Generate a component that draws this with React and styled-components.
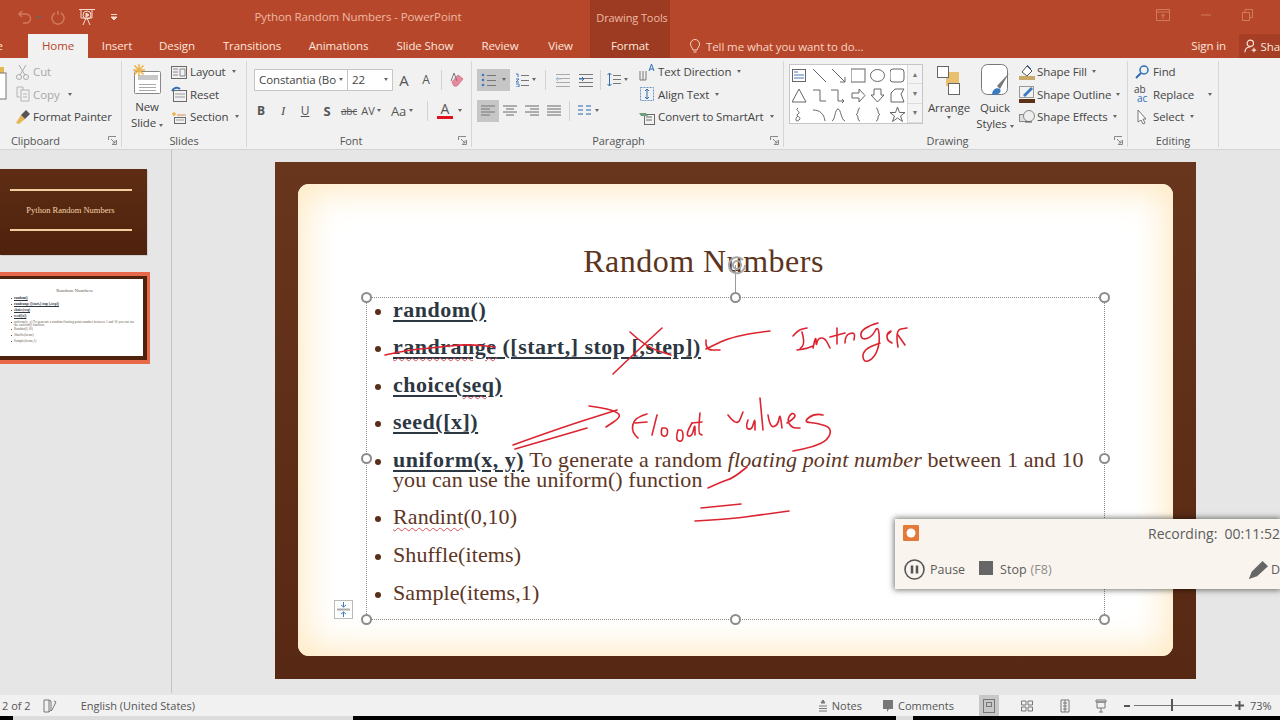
import React from 'react';
import styled, { createGlobalStyle } from 'styled-components';

const Global = createGlobalStyle`
  html, body { margin: 0; padding: 0; background: #e6e6e6; overflow: hidden; }
  * { box-sizing: border-box; }
`;

const Page = styled.div`
  position: relative;
  width: 1280px;
  height: 720px;
  overflow: hidden;
  display: flex;
  flex-direction: column;
  background: #e6e6e6;
  font-family: "Open Sans", "Noto Sans", sans-serif;
  font-size: 11.5px;
  letter-spacing: -0.1px;
  color: #444;
`;

/* title bar + tabs */
const TitleBar = styled.div`
  height: 34px;
  flex: none;
  display: flex;
  align-items: stretch;
  background: #b7472a;
  color: #f1bda9;
`;
const Quick = styled.div`
  width: 190px;
  flex: none;
  display: flex;
  align-items: center;
  padding-left: 17px;
`;
const QuickSlot = styled.span`
  display: flex;
  margin-left: ${p => p.$left || 0}px;
`;
const DocTitle = styled.div`
  width: 400px;
  flex: none;
  padding-right: 64px;
  text-align: center;
  line-height: 34px;
  color: #eeb9a4;
`;
const ContextHead = styled.div`
  width: 80px;
  flex: none;
  padding-left: 4px;
  background: #9c3b21;
  text-align: center;
  line-height: 36px;
  font-size: 11px;
  color: #eeb9a4;
`;
const WinButtons = styled.div`
  margin-left: auto;
  display: flex;
  gap: 30px;
  align-items: center;
  padding: 0 27px 4px 0;
`;
const TabBar = styled.div`
  height: 24px;
  flex: none;
  display: flex;
  background: #b7472a;
  color: #fbe6dd;
`;
const Tab = styled.div`
  width: ${p => p.$w}px;
  flex: none;
  text-align: center;
  line-height: 24px;
  overflow: hidden;
  white-space: nowrap;
  background: ${p => (p.$active ? '#f1f1f1' : p.$context ? '#9c3b21' : 'transparent')};
  color: ${p => (p.$active ? '#b7472a' : '#fbe6dd')};
`;
const FileTab = styled.div`
  width: 28px;
  flex: none;
  line-height: 24px;
  white-space: nowrap;
  overflow: hidden;
  text-indent: -15px;
`;
const TellMe = styled.div`
  margin-left: 19px;
  display: flex;
  align-items: center;
  gap: 5px;
  color: #f7d4c6;
  width: 500px;
`;
const SignIn = styled.div`
  margin-left: auto;
  line-height: 24px;
  color: #fbe6dd;
  padding-right: 13px;
`;
const Share = styled.div`
  width: 41px;
  flex: none;
  display: flex;
  align-items: center;
  gap: 3px;
  padding-left: 5px;
  background: #a53e24;
  color: #fbe6dd;
  white-space: nowrap;
  overflow: hidden;
`;

/* ribbon */
const Ribbon = styled.div`
  height: 92px;
  flex: none;
  display: flex;
  padding-top: 3px;
  background: #f1f1f1;
  border-bottom: 1px solid #d4d4d4;
  white-space: nowrap;
`;
const Group = styled.div`
  position: relative;
  width: ${p => p.$w}px;
  flex: none;
  height: 86px;
  display: flex;
  flex-direction: column;
  border-right: 1px solid #d6d6d6;
`;
const GroupBody = styled.div`
  height: 71px;
  flex: none;
  display: flex;
  padding-left: ${p => p.$left || 0}px;
  gap: ${p => p.$gap || 0}px;
`;
const GroupLabel = styled.div`
  text-align: ${p => (p.$left ? 'left' : 'center')};
  padding-left: ${p => p.$left || 0}px;
  padding-right: ${p => p.$right || 0}px;
  font-size: 11px;
  line-height: 15px;
  margin-top: 1px;
  color: #555;
`;
const Launcher = styled.svg`
  position: absolute;
  right: 4px;
  bottom: 2px;
`;
const Stack = styled.div`
  display: flex;
  flex-direction: column;
  width: ${p => (p.$w ? `${p.$w}px` : 'auto')};
  flex: none;
  padding-top: ${p => p.$top || 0}px;
`;
const Item = styled.div`
  height: 22.5px;
  display: flex;
  align-items: center;
  margin-top: -0.5px;
  margin-bottom: 0.5px;
  gap: ${p => p.$gap ?? 4}px;
  color: ${p => (p.$dim ? '#a8a8a8' : '#444')};
`;
const Caret = styled.span`
  display: inline-block;
  width: 0;
  height: 0;
  margin-left: ${p => p.$left ?? 3}px;
  border-left: 2.5px solid transparent;
  border-right: 2.5px solid transparent;
  border-top: 3px solid #666;
`;
const BigButton = styled.div`
  width: ${p => p.$w}px;
  flex: none;
  display: flex;
  flex-direction: column;
  align-items: center;
  line-height: 16px;
  padding-top: ${p => p.$top || 0}px;
`;
const IconSlot = styled.div`
  height: ${p => p.$h}px;
  flex: none;
`;
const ToolRow = styled.div`
  height: 31px;
  display: flex;
  align-items: center;
  margin-left: ${p => p.$left || 0}px;
`;
const Combo = styled.div`
  width: ${p => p.$w}px;
  height: 22px;
  flex: none;
  display: flex;
  align-items: center;
  justify-content: space-between;
  padding: 0 4px;
  margin-right: -1px;
  background: #fff;
  border: 1px solid #c6c6c6;
`;
const Tool = styled.div`
  width: ${p => p.$w || 22}px;
  height: 22px;
  flex: none;
  display: flex;
  align-items: center;
  justify-content: center;
  background: ${p => (p.$on ? '#c6c6c6' : 'transparent')};
  font-family: ${p => (p.$serif ? '"Liberation Serif", serif' : 'inherit')};
  font-weight: ${p => (p.$bold ? 700 : 400)};
  font-style: ${p => (p.$italic ? 'italic' : 'normal')};
  text-decoration: ${p => (p.$under ? 'underline' : p.$strike ? 'line-through' : 'none')};
  font-size: ${p => p.$size || 12}px;
  color: #555;
`;
const ColorTool = styled(Tool)`
  flex-direction: column;
  line-height: 14px;
  font-size: 14px;
`;
const ToolSep = styled.div`
  width: 1px;
  height: 20px;
  flex: none;
  margin: 0 ${p => p.$m || 5}px;
  background: #d2d2d2;
`;
const Gallery = styled.div`
  width: 134px;
  height: 60px;
  flex: none;
  margin-top: 3px;
  display: flex;
  background: #fff;
  border: 1px solid #c6c6c6;
`;
const ShapeGrid = styled.div`
  flex: 1;
  padding-top: 1px;
  display: grid;
  grid-template-columns: repeat(6, 19.5px);
  grid-auto-rows: 19.6px;
  justify-items: center;
  align-items: center;
`;
const GalleryScroll = styled.div`
  width: 15px;
  flex: none;
  display: flex;
  flex-direction: column;
  border-left: 1px solid #d8d8d8;
  background: #f4f4f4;
`;
const ScrollCell = styled.div`
  flex: 1;
  display: flex;
  align-items: center;
  justify-content: center;
  font-size: 7px;
  color: #777;
  border-bottom: 1px solid #dcdcdc;
`;
const ReplaceGlyph = styled.div`
  width: 16px;
  flex: none;
  display: flex;
  flex-direction: column;
  font-size: 10px;
  line-height: 9px;
  letter-spacing: 0;
  color: #444;
  span + span {
    color: #2f6eb5;
    padding-left: 3px;
  }
`;

/* workspace */
const Workspace = styled.div`
  flex: 1;
  min-height: 0;
  display: flex;
`;
const ThumbRail = styled.div`
  width: 172px;
  flex: none;
  margin-bottom: 2px;
  padding-top: 19px;
  display: flex;
  flex-direction: column;
  border-right: 1px solid #c4c4c4;
`;
const TitleThumb = styled.div`
  width: 147px;
  height: 86px;
  flex: none;
  display: flex;
  flex-direction: column;
  align-items: center;
  justify-content: center;
  padding-right: 6px;
  padding-bottom: 4px;
  gap: 14px;
  background: linear-gradient(180deg, #5e2d13, #4f220e);
  box-shadow: 1px 1px 0 #cfcfcf;
  color: #f3d6a8;
  font-family: "Liberation Serif", serif;
  font-size: 8.5px;
  letter-spacing: 0;
  white-space: nowrap;
`;
const ThumbRule = styled.div`
  width: 122px;
  height: 2px;
  background: #f0cf9f;
`;
const ActiveThumb = styled.div`
  width: 150px;
  height: 92px;
  flex: none;
  margin-top: 17px;
  padding: 4px 3px 4px 0;
  background: #e8694a;
`;
const ThumbWood = styled.div`
  height: 100%;
  padding: 3px 4px 4px 0;
  background: #4f220e;
`;
const ThumbPage = styled.div`
  height: 100%;
  background: #fff;
  padding: 8px 8px 0 14px;
  font-family: "Liberation Serif", serif;
  font-size: 3.4px;
  letter-spacing: 0;
  line-height: 3px;
  color: #6a5a50;
`;
const ThumbHead = styled.div`
  text-align: center;
  font-size: 5px;
  line-height: 8px;
  margin-bottom: 2px;
`;
const ThumbLine = styled.div`
  position: relative;
  margin-bottom: ${p => p.$tight ? 1 : 3}px;
  font-weight: ${p => (p.$bold ? 700 : 400)};
  text-decoration: ${p => (p.$bold ? 'underline' : 'none')};
  color: ${p => (p.$bold ? '#2c3440' : '#6a5a50')};
  &::before {
    content: "";
    position: absolute;
    left: -3px;
    top: 1px;
    width: 1px;
    height: 1px;
    background: #6a4a38;
  }
`;
const Stage = styled.div`
  flex: 1;
  padding: 12px 0 0 103px;
`;
const Slide = styled.div`
  width: 921px;
  height: 517px;
  padding: 22px 23px 23px;
  background: linear-gradient(180deg, #68361c, #5f2e17 55%, #572813);
`;
const Card = styled.div`
  height: 100%;
  padding-left: 68px;
  border-radius: 11px;
  background: #fff;
  box-shadow: inset 0 0 34px 8px #ffeac4;
`;
const SlideTitle = styled.div`
  height: 113px;
  padding: 58px 64px 0 0;
  margin-left: -68px;
  text-align: center;
  font-family: "Liberation Serif", serif;
  font-size: 32px;
  line-height: 38px;
  letter-spacing: 0.5px;
  color: #5c3420;
`;
const Frame = styled.div`
  position: relative;
  width: 739px;
  height: 323px;
  padding: 1.5px 8px 0 8px;
  display: flex;
  flex-direction: column;
  gap: 17.6px;
  border: 1px dotted #8a8a8a;
  font-family: "Liberation Serif", serif;
  font-size: 22px;
  letter-spacing: 0.1px;
  line-height: 20px;
  color: #5d3524;
`;
const Bullet = styled.li`
  display: flex;
  list-style: none;
  gap: 12px;
  &::before {
    content: "";
    flex: none;
    width: 6px;
    height: 6px;
    margin-top: 9px;
    border-radius: 50%;
    background: #5a2f1a;
  }
`;
const Fn = styled.span`
  font-weight: 700;
  letter-spacing: 0.5px;
  color: #2d3742;
  text-decoration: underline;
  text-decoration-thickness: 1.5px;
  text-underline-offset: 3px;
`;
const Sic = styled.span`
  text-decoration: underline wavy #d9505a 1px;
  text-underline-offset: 3px;
`;
const Handle = styled.span`
  position: absolute;
  left: ${p => p.$x}px;
  top: ${p => p.$y}px;
  width: 11px;
  height: 11px;
  margin: -6px 0 0 -6px;
  border: 2px solid #8c8c8c;
  border-radius: 50%;
  background: #fff;
`;
const RotateStem = styled.span`
  position: absolute;
  left: 368px;
  top: -33px;
  width: 1px;
  height: 33px;
  background: #9a9a9a;
`;
const RotateIcon = styled.svg`
  position: absolute;
  left: 359px;
  top: -44px;
`;
const AutoFit = styled.svg`
  position: absolute;
  left: -33px;
  top: 302px;
`;
const Ink = styled.svg`
  position: absolute;
  left: 0;
  top: 0;
  pointer-events: none;
`;

/* recorder */
const Recorder = styled.div`
  position: absolute;
  left: 895px;
  top: 519px;
  width: 385px;
  height: 70px;
  display: flex;
  flex-direction: column;
  background: #f9f4ee;
  box-shadow: 0 0 6px 1px rgba(0, 0, 0, 0.55);
  color: #5c5c5c;
  white-space: nowrap;
`;
const RecTop = styled.div`
  height: 28px;
  flex: none;
  display: flex;
  align-items: center;
  justify-content: space-between;
  padding: 0 0 0 8px;
  font-size: 14px;
  letter-spacing: 0;
  overflow: hidden;
`;
const RecBottom = styled.div`
  flex: 1;
  display: flex;
  align-items: center;
  padding: 3px 0 0 9px;
  overflow: hidden;
  font-size: 12.5px;
  letter-spacing: 0;
`;
const RecLabel = styled.span`
  margin-left: ${p => p.$left}px;
`;
const Hint = styled.span`
  color: #8c8c8c;
  margin-left: 4px;
`;
const Square = styled.span`
  width: 14px;
  height: 14px;
  margin: 0 0 3px 14px;
  background: #666;
`;
const PencilWrap = styled.div`
  margin-left: auto;
  display: flex;
  align-items: center;
  gap: 2px;
  width: 32px;
  flex: none;
`;

/* status */
const StatusBar = styled.div`
  height: 21px;
  flex: none;
  display: flex;
  align-items: center;
  background: #f1f1f1;
  font-size: 11px;
  letter-spacing: 0;
  color: #555;
  white-space: nowrap;
`;
const StatusText = styled.span`
  display: flex;
  margin-left: ${p => p.$left || 0}px;
`;
const StatusTools = styled.div`
  margin-left: auto;
  display: flex;
  align-items: center;
  height: 100%;
`;
const ViewBtn = styled.div`
  width: ${p => p.$w || 20}px;
  height: 100%;
  margin-left: ${p => p.$before || 0}px;
  margin-right: ${p => p.$gap || 0}px;
  display: flex;
  align-items: center;
  justify-content: center;
  background: ${p => (p.$on ? '#c8c8c8' : 'transparent')};
`;
const ZoomTrack = styled.div`
  position: relative;
  width: 98px;
  height: 1px;
  margin: 0 3px;
  background: #777;
`;
const ZoomThumb = styled.span`
  position: absolute;
  left: 37px;
  top: -6px;
  width: 2px;
  height: 12px;
  background: #555;
`;
const ZoomValue = styled.span`
  width: 30px;
  margin-left: 6px;
  overflow: hidden;
`;
const TaskStrip = styled.div`
  height: 4px;
  flex: none;
  display: grid;
  grid-template-columns: 13px 340px 543px 17px 1fr;
  background: #000;
`;
const StripLight = styled.div`
  background: #dcdcdc;
`;

const Icon = ({ w = 16, h = 16, children, stroke = '#6b6b6b', fill = 'none', sw = 1 }) => (
  <svg width={w} height={h} viewBox={`0 0 ${w} ${h}`} fill={fill} stroke={stroke} strokeWidth={sw}>{children}</svg>
);

const LauncherIcon = () => (
  <Launcher width="9" height="9" viewBox="0 0 9 9" fill="none" stroke="#888"><path d="M.5 4V.5H8M8.5 4v4.500H4M3 3l4 4M7 4.500V7H4.500" /></Launcher>
);

const Lines = ({ x = 0, y = 0, n = 3, len = 12, gap = 4, color = '#777' }) => (
  <g stroke={color}>{Array.from({ length: n }, (_, i) => <path key={i} d={`M${x} ${y + i * gap + .5}h${len}`} />)}</g>
);

const shapes = [
  <g key="a"><rect x=".5" y="1.500" width="13" height="12" /><path d="M2 4h4M2 7h10M2 10h10" stroke="#4a7ab5" /></g>,
  <path key="b" d="M1 1l13 13" />,
  <path key="c" d="M1 1l13 13M9 14h5V9" />,
  <rect key="d" x="0" y="1" width="14" height="13" />,
  <ellipse key="e" cx="7.500" cy="7.500" rx="7" ry="6" />,
  <rect key="f" x="0" y="1" width="14" height="13" rx="3" />,
  <path key="g" d="M7 1l7 13H0z" />,
  <path key="h" d="M1 2h7v11h6" />,
  <path key="i" d="M0 2h7v11h6M11 11l2 2-2 2" />,
  <path key="j" d="M1 5h7V1l6 6.500-6 6.500v-4H1z" />,
  <path key="k" d="M4 1h7v6h3l-6.500 7L1 7h3z" />,
  <path key="l" d="M1 14V5l4-4h9l-3 5 3 8z" />,
  <path key="m" d="M6 1C2 3 10 5 6 7s5 3 1 6-4-2-1-4" />,
  <path key="n" d="M1 3c7 0 11 4 12 11" />,
  <path key="o" d="M1 14C4 13 4 2 7 2s3 11 7 12" />,
  <path key="p" d="M9 1C6 1 8 7 5 7.500 8 8 6 14 9 14" />,
  <path key="q" d="M6 1c3 0 1 6 4 6.500C7 8 9 14 6 14" />,
  <path key="r" d="M7.500 0l2 5.500h5.500l-4.500 3.500 2 5.500-5-3.500-5 3.500 2-5.500L0 5.500h5.500z" />,
];

const ClipboardGroup = () => (
  <Group $w={122}>
    <GroupBody>
      <Stack $w={15}>
        <Icon w={10} h={50}><rect x="-4" y="6" width="8" height="7" fill="#e2b850" stroke="none" /><rect x="-4" y="12" width="10" height="26" fill="#fff" stroke="#777" /></Icon>
      </Stack>
      <Stack>
        <Item $dim $gap={2}>
          <Icon w={16} h={16} stroke="#aaa"><circle cx="4" cy="13" r="2.500" /><circle cx="11" cy="13" r="2.500" /><path d="M5 11L11 1M10 11L4 1" /></Icon>Cut
        </Item>
        <Item $dim $gap={2}>
          <Icon w={16} h={16} stroke="#b4b4b4"><path d="M2 1h6v3M2 1v10h3" /><rect x="6" y="4" width="8" height="11" /><path d="M8 8h4M8 11h4" /></Icon>Copy<Caret $left={6} />
        </Item>
        <Item $gap={2}>
          <Icon w={16} h={16} stroke="none"><path d="M1 14l5-8 4 4-6 5z" fill="#e8b653" /><path d="M6 6l5-5 4 4-5 5z" fill="#555" /></Icon>Format Painter
        </Item>
      </Stack>
    </GroupBody>
    <GroupLabel $left={11}>Clipboard</GroupLabel>
    <LauncherIcon />
  </Group>
);

const SlidesGroup = () => (
  <Group $w={125}>
    <GroupBody $left={9} $gap={8}>
      <BigButton $w={32} $top={2}>
        <IconSlot $h={36}>
          <Icon w={30} h={33}>
            <rect x="2.500" y="8.500" width="26" height="22" rx="1" fill="#fff" stroke="#888" />
            <rect x="6" y="12" width="20" height="5" fill="#c8c8c8" stroke="none" />
            <Lines x={7} y={21} n={3} len={17} gap={3} color="#aaa" />
            <path d="M7 1v12M1 7h12M2.500 2.500l9 9M11.500 2.500l-9 9" stroke="#eeb24b" strokeWidth="1.500" />
          </Icon>
        </IconSlot>
        <span>New</span>
        <span>Slide<Caret /></span>
      </BigButton>
      <Stack>
        <Item $gap={3}>
          <Icon><rect x=".5" y="2.500" width="15" height="12" /><path d="M2 5h5M2 8h5M2 11h5M9 5h5v7H9z" stroke="#888" /></Icon>Layout<Caret />
        </Item>
        <Item $gap={3}>
          <Icon><rect x="2.500" y="4.500" width="13" height="11" /><path d="M4 8h10M4 11h10" stroke="#999" /><path d="M1 5c2-4 6-4 8-2" stroke="#2f6eb5" strokeWidth="2" /></Icon>Reset
        </Item>
        <Item $gap={3}>
          <Icon><path d="M1 5h4M3 3v4" stroke="#eeb24b" strokeWidth="1.500" /><path d="M6 6h9" stroke="#e08a4a" /><rect x="3.500" y="8.500" width="11" height="6" /><path d="M5 11h8" stroke="#999" /></Icon>Section<Caret />
        </Item>
      </Stack>
    </GroupBody>
    <GroupLabel>Slides</GroupLabel>
  </Group>
);

const FontGroup = () => (
  <Group $w={225}>
    <GroupBody $left={7}>
      <Stack $top={3}>
        <ToolRow>
          <Combo $w={94}>Constantia (Bo<Caret $left={0} /></Combo>
          <Combo $w={46}>22<Caret $left={0} /></Combo>
          <Tool $w={24} $size={15}>A</Tool>
          <Tool $w={20} $size={12}>A</Tool>
          <ToolSep $m={5} />
          <Tool $w={20}>
            <Icon><path d="M3 10l6-7 5 4-6 7H5z" fill="#e98a9c" stroke="#d07a8c" /><path d="M2 9L5 1l3 8" stroke="#777" /></Icon>
          </Tool>
        </ToolRow>
        <ToolRow $left={-4}>
          <Tool $bold>B</Tool>
          <Tool $italic $serif $size={13}>I</Tool>
          <Tool $under>U</Tool>
          <Tool $bold $size={13}>S</Tool>
          <Tool $strike $size={10}>abc</Tool>
          <Tool $size={11}>AV<Caret $left={2} /></Tool>
          <Tool $w={40} $size={13}>Aa<Caret /></Tool>
          <ToolSep $m={5} />
          <ColorTool $w={24}>
            A
            <Icon w={16} h={3} stroke="none"><rect width="16" height="3" fill="#e0101c" /></Icon>
          </ColorTool>
          <Caret $left={1} />
        </ToolRow>
      </Stack>
    </GroupBody>
    <GroupLabel $right={16}>Font</GroupLabel>
    <LauncherIcon />
  </Group>
);

const ParagraphGroup = () => (
  <Group $w={312}>
    <GroupBody $left={5} $gap={12}>
      <Stack $w={150} $top={3}>
        <ToolRow>
          <Tool $w={33} $on>
            <Icon w={18} h={14}><circle cx="2" cy="2" r="1.300" fill="#3a7bc0" stroke="none" /><circle cx="2" cy="7" r="1.300" fill="#3a7bc0" stroke="none" /><circle cx="2" cy="12" r="1.300" fill="#3a7bc0" stroke="none" /><Lines x={6} y={2} len={9} gap={5} /></Icon>
            <Caret />
          </Tool>
          <Tool $w={30}>
            <Icon w={14} h={14}><path d="M1 1h2v3M1 6h3L1 9h3M1 11h3v3H1" stroke="#3a7bc0" /><Lines x={6} y={2} len={8} gap={5} /></Icon>
            <Caret />
          </Tool>
          <ToolSep $m={5} />
          <Tool $w={23}><Icon><Lines x={1} y={2} n={4} len={14} gap={4} color="#aaa" /><path d="M6 7H1l2-2M1 7l2 2" stroke="#a6bcd8" /></Icon></Tool>
          <Tool $w={23}><Icon><Lines x={1} y={2} n={4} len={14} gap={4} /><path d="M1 7h5l-2-2M6 7L4 9" stroke="#2f6eb5" /></Icon></Tool>
          <ToolSep $m={3} />
          <Tool $w={27}>
            <Icon w={14} h={15}><path d="M2.500 1v13M.5 3l2-2 2 2M.5 12l2 2 2-2" stroke="#2f6eb5" /><Lines x={6} y={3} n={3} len={8} gap={4} /></Icon>
            <Caret />
          </Tool>
        </ToolRow>
        <ToolRow>
          <Tool $on><Icon><path d="M1 3h14M1 6h9M1 9h14M1 12h9" stroke="#777" /></Icon></Tool>
          <Tool><Icon><path d="M1 3h14M4 6h8M1 9h14M4 12h8" /></Icon></Tool>
          <Tool><Icon><path d="M1 3h14M6 6h9M1 9h14M6 12h9" /></Icon></Tool>
          <Tool><Icon><path d="M1 3h14M1 6h14M1 9h14M1 12h14" /></Icon></Tool>
          <ToolSep $m={4} />
          <Tool $w={28}>
            <Icon w={15} h={13}><path d="M1 2h5M1 6h5M1 10h5M9 2h5M9 6h5M9 10h5" stroke="#6a93c6" strokeWidth="1.500" /></Icon>
            <Caret />
          </Tool>
        </ToolRow>
      </Stack>
      <Stack>
        <Item $gap={3}>
          <Icon w={16} h={18}><path d="M1 8v9M4 8v9M7 8v9M1 17h6" stroke="#777" /><path d="M10 8l2.500-7L15 8M11 6h3" stroke="#2f6eb5" /></Icon>Text Direction<Caret />
        </Item>
        <Item $gap={3}>
          <Icon w={16} h={16}><rect x="1.500" y="1.500" width="13" height="13" strokeDasharray="2 1" stroke="#6a93c6" /><path d="M8 3v10M6 5l2-2 2 2M6 11l2 2 2-2" stroke="#2f6eb5" /></Icon>Align Text<Caret />
        </Item>
        <Item $gap={3}>
          <Icon w={16} h={16}><rect x="5.500" y="5.500" width="10" height="10" /><path d="M7 8h6M7 11h6" /><path d="M0 4h7l2 3H2z" fill="#6aa07a" stroke="none" /></Icon>Convert to SmartArt<Caret />
        </Item>
      </Stack>
    </GroupBody>
    <GroupLabel $right={18}>Paragraph</GroupLabel>
    <LauncherIcon />
  </Group>
);

const DrawingGroup = () => (
  <Group $w={344}>
    <GroupBody $left={5}>
      <Gallery>
        <ShapeGrid>
          {shapes.map(s => <Icon key={s.key} w={15} h={15} stroke="#666">{s}</Icon>)}
        </ShapeGrid>
        <GalleryScroll>
          <ScrollCell>▲</ScrollCell>
          <ScrollCell>▼</ScrollCell>
          <ScrollCell>▼</ScrollCell>
        </GalleryScroll>
      </Gallery>
      <BigButton $w={52} $top={2}>
        <IconSlot $h={37}>
          <Icon w={30} h={34} stroke="#666">
            <rect x="12" y="9" width="13" height="14" fill="#e8c070" stroke="none" />
            <rect x="3.500" y="3.500" width="11" height="11" fill="#fff" />
            <rect x="14.500" y="20.500" width="11" height="11" fill="#fff" />
          </Icon>
        </IconSlot>
        <span>Arrange</span>
        <Caret $left={0} />
      </BigButton>
      <BigButton $w={40}>
        <IconSlot $h={39}>
          <Icon w={30} h={39} stroke="#777">
            <rect x="1.500" y="3.500" width="26" height="30" rx="6" fill="#fff" />
            <path d="M29 12L17 25l3 3z" fill="#777" stroke="none" />
            <path d="M12 34c0-5 4-8 8-6 2 3-1 6-8 6z" fill="#3a7bc0" stroke="none" />
          </Icon>
        </IconSlot>
        <span>Quick</span>
        <span>Styles<Caret /></span>
      </BigButton>
      <Stack $w={109}>
        <Item $gap={2}>
          <span />
          <span />
          <Icon w={16} h={18}><path d="M3 9l5-6 5 5-5 5z" fill="#fff" stroke="#555" /><path d="M8 2l4 4" stroke="#2f6eb5" /><rect x="0" y="13" width="16" height="4" fill="#c9a968" stroke="none" /></Icon>Shape Fill<Caret />
        </Item>
        <Item $gap={2}>
          <span />
          <span />
          <Icon w={16} h={18}><rect x=".5" y="1.500" width="14" height="11" stroke="#999" /><path d="M4 10l8-8 2 2-8 8z" fill="#3a7bc0" stroke="none" /><rect x="0" y="14" width="16" height="4" fill="#5c3317" stroke="none" /></Icon>Shape Outline<Caret />
        </Item>
        <Item $gap={2}>
          <span />
          <span />
          <Icon w={16} h={16} stroke="#888"><rect x=".5" y="5.500" width="11" height="7" fill="#ddd" /><circle cx="10" cy="7" r="5.500" fill="#eee" /><path d="M6 13h7" stroke="#555" /></Icon>Shape Effects<Caret />
        </Item>
      </Stack>
    </GroupBody>
    <GroupLabel $right={16}>Drawing</GroupLabel>
    <LauncherIcon />
  </Group>
);

const EditingGroup = () => (
  <Group $w={91}>
    <GroupBody $left={6}>
      <Stack>
        <Item $gap={3}>
          <Icon><circle cx="10" cy="6" r="4" stroke="#2f6eb5" strokeWidth="1.500" /><path d="M7 9l-5 5" stroke="#2f6eb5" strokeWidth="2" /></Icon>Find
        </Item>
        <Item $gap={3}>
          <ReplaceGlyph><span>ab</span><span>ac</span></ReplaceGlyph>Replace<Caret $left={11} />
        </Item>
        <Item $gap={3}>
          <Icon stroke="#777"><path d="M4 1v12l3-2 2 4 2-1-2-4h3z" fill="#fff" /></Icon>Select<Caret />
        </Item>
      </Stack>
    </GroupBody>
    <GroupLabel>Editing</GroupLabel>
  </Group>
);

// pen strokes, as point lists in page pixels
const strokes = [
  '385,355 408,350 431,348 467,344 495,347',
  '613,374 636,352 662,328',
  '630,332 646,347 671,355',
  '770,331 735,335 706,349',
  '706,340 705,350 720,350',
  // Integr
  '793,336 798,330 807,328',
  '802,332 805,343 800,349',
  '797,350 805,349 813,346',
  '813,348 816,334 816,347 818,338 825,338 830,348',
  '837,328 837,344',
  '830,337 845,333',
  '845,343 845,335 855,332 854,340',
  '878,323 870,325 860,332 862,340 872,337 878,325 880,342 875,357 865,363 862,355 867,348 880,343',
  '887,335 893,330 887,333 887,340 892,343',
  '898,347 895,330 907,328',
  '898,335 905,345',
  // double arrow
  '513,445 560,428 617,410',
  '515,449 560,436 587,428',
  '589,406 604,408 617,412 621,417 606,427',
  // Float
  '647,414 637,417 632,425 633,433 638,438',
  '635,423 647,422',
  '657,415 652,435',
  '662,428 660,435 667,437 668,428 662,428',
  '678,430 675,440 683,442 683,430 678,430',
  '692,423 685,435 692,437 695,423 695,435',
  '700,413 698,433 702,435',
  '692,423 702,422',
  // values
  '728,415 737,427 743,412',
  '748,420 745,428 752,430 755,417 755,430',
  '760,398 763,430',
  '768,415 770,428 778,425 780,413 782,428',
  '787,423 797,417 792,412 787,420 792,428 800,428',
  '823,415 815,413 803,422 817,423 832,428 828,440 813,447 793,451',
  // under function and below
  '708,488 721,482 733,478 747,467',
  '701,508 741,504',
  '695,521 730,519 760,515 789,511',
];

const smooth = line => {
  const pts = line.split(' ').map(p => p.split(',').map(Number));
  let d = `M${pts[0][0]} ${pts[0][1]}`;
  for (let i = 1; i < pts.length - 1; i++) {
    const mx = (pts[i][0] + pts[i + 1][0]) / 2;
    const my = (pts[i][1] + pts[i + 1][1]) / 2;
    d += ` Q${pts[i][0]} ${pts[i][1]} ${mx} ${my}`;
  }
  const last = pts[pts.length - 1];
  return `${d} L${last[0]} ${last[1]}`;
};

export default function App() {
  return (
    <Page>
      <Global />
      <TitleBar>
        <Quick>
          <Icon w={15} h={15} stroke="#cf7a5e" sw={1.5}><path d="M5 1L2 4l3 3M2 4h7a4 4 0 0 1 0 9H6" /></Icon>
          <QuickSlot $left={5}><Caret $left={0} /></QuickSlot>
          <QuickSlot $left={9}><Icon w={15} h={15} stroke="#cf7a5e" sw={1.5}><path d="M11 3a6 6 0 1 1-6 0M8 1v4" /></Icon></QuickSlot>
          <QuickSlot $left={13}><Icon w={18} h={18} stroke="#f4dcd0"><path d="M1 1.500h16M3 2v8h11V2M8 10l-3 7M9 10l3 7" /><circle cx="9" cy="7" r="4" /><path d="M8 5l3 2-3 2z" fill="#f4dcd0" /></Icon></QuickSlot>
          <QuickSlot $left={13}><Icon w={10} h={10} stroke="#f4dcd0"><path d="M2 2.500h6M2 5h6l-3 3z" fill="#f4dcd0" /></Icon></QuickSlot>
        </Quick>
        <DocTitle>Python Random Numbers - PowerPoint</DocTitle>
        <ContextHead>Drawing Tools</ContextHead>
        <WinButtons>
          <Icon w={14} h={12} stroke="#d07a5e"><path d="M.5.5h13v11H.5zM.5 3h13M7 10V5M5 7l2-2 2 2" /></Icon>
          <Icon w={12} h={4} stroke="#d07a5e"><path d="M1 2h10" /></Icon>
          <Icon w={11} h={12} stroke="#d07a5e"><path d="M.5 3.500h7v8h-7zM3 3V.5h7.500v8H8" /></Icon>
        </WinButtons>
      </TitleBar>
      <TabBar>
        <FileTab>File</FileTab>
        <Tab $w={60} $active>Home</Tab>
        <Tab $w={58}>Insert</Tab>
        <Tab $w={62}>Design</Tab>
        <Tab $w={88}>Transitions</Tab>
        <Tab $w={85}>Animations</Tab>
        <Tab $w={88}>Slide Show</Tab>
        <Tab $w={62}>Review</Tab>
        <Tab $w={59}>View</Tab>
        <Tab $w={80} $context>Format</Tab>
        <TellMe>
          <Icon w={12} h={15} stroke="#f7d4c6"><path d="M4 11C3 8 1.500 7.500 1.500 5a4.500 4.500 0 0 1 9 0C10.500 7.500 9 8 8 11zM4.500 13h3" /></Icon>
          Tell me what you want to do...
        </TellMe>
        <SignIn>Sign in</SignIn>
        <Share>
          <Icon w={15} h={16} stroke="#fbe6dd" sw={1.3}><circle cx="7" cy="5" r="3.500" /><path d="M1 15c0-4 3-6 6-6M11 10v5M8.500 12.500h5" /></Icon>
          Sha
        </Share>
      </TabBar>
      <Ribbon>
        <ClipboardGroup />
        <SlidesGroup />
        <FontGroup />
        <ParagraphGroup />
        <DrawingGroup />
        <EditingGroup />
      </Ribbon>
      <Workspace>
        <ThumbRail>
          <TitleThumb>
            <ThumbRule />
            <span>Python Random Numbers</span>
            <ThumbRule />
          </TitleThumb>
          <ActiveThumb>
            <ThumbWood>
              <ThumbPage>
                <ThumbHead>Random Numbers</ThumbHead>
                <ThumbLine $bold>random()</ThumbLine>
                <ThumbLine $bold>randrange ([start,] stop [,step])</ThumbLine>
                <ThumbLine $bold>choice(seq)</ThumbLine>
                <ThumbLine $bold>seed([x])</ThumbLine>
                <ThumbLine $tight>uniform(x, y) To generate a random floating point number between 1 and 10 you can use the uniform() function</ThumbLine>
                <ThumbLine>Randint(0,10)</ThumbLine>
                <ThumbLine>Shuffle(items)</ThumbLine>
                <ThumbLine>Sample(items,1)</ThumbLine>
              </ThumbPage>
            </ThumbWood>
          </ActiveThumb>
        </ThumbRail>
        <Stage>
          <Slide>
            <Card>
              <SlideTitle>Random Numbers</SlideTitle>
              <Frame>
                <Bullet><span><Fn>random()</Fn></span></Bullet>
                <Bullet><span><Fn><Sic>randrange</Sic> ([start,] stop [,step])</Fn></span></Bullet>
                <Bullet><span><Fn>choice(<Sic>seq</Sic>)</Fn></span></Bullet>
                <Bullet><span><Fn>seed([x])</Fn></span></Bullet>
                <Bullet><span><Fn>uniform(x, y)</Fn> To generate a random <em>floating point number</em> between 1 and 10 you can use the uniform() function</span></Bullet>
                <Bullet><span><Sic>Randint</Sic>(0,10)</span></Bullet>
                <Bullet><span>Shuffle(items)</span></Bullet>
                <Bullet><span>Sample(items,1)</span></Bullet>
                <RotateStem />
                <RotateIcon width="22" height="22" viewBox="0 0 22 22" fill="none" stroke="#a8a8a8" strokeWidth="2"><path d="M17 6a8 8 0 1 0 2 5" /><circle cx="11" cy="11" r="4" /></RotateIcon>
                <Handle $x={0} $y={0} />
                <Handle $x={369} $y={0} />
                <Handle $x={738} $y={0} />
                <Handle $x={0} $y={161} />
                <Handle $x={738} $y={161} />
                <Handle $x={0} $y={322} />
                <Handle $x={369} $y={322} />
                <Handle $x={738} $y={322} />
                <AutoFit width="19" height="19" viewBox="0 0 19 19" fill="#fff" stroke="#bbb"><rect x=".5" y=".5" width="18" height="18" /><path d="M3 9.500h13" stroke="#aaa" strokeWidth="2" /><path d="M9.500 2v5M7 5l2.500 2L12 5M9.500 17v-5M7 14l2.500-2 2.500 2" stroke="#3a7bc0" fill="none" /></AutoFit>
              </Frame>
            </Card>
          </Slide>
        </Stage>
      </Workspace>
      <StatusBar>
        <StatusText $left={2}>2 of 2</StatusText>
        <StatusText $left={12}><Icon w={14} h={14} stroke="#777"><path d="M1 1h5v12H1zM6 1l2 1v9l-2 2M11 2l2 1-4 8-1 1" /></Icon></StatusText>
        <StatusText $left={24}>English (United States)</StatusText>
        <StatusTools>
          <Icon w={12} h={13} stroke="#777"><path d="M2 7h8M2 9.500h8M2 12h8" /><path d="M6 1l2 3H4z" fill="#777" /></Icon>
          <StatusText $left={3}>Notes</StatusText>
          <StatusText $left={20}><Icon w={12} h={13} stroke="none"><path d="M1 1h10v9H7l-2 3v-3H1z" fill="#777" /></Icon></StatusText>
          <StatusText $left={4}>Comments</StatusText>
          <ViewBtn $on $before={25} $gap={18}><Icon w={12} h={14} stroke="#777"><rect x=".5" y=".5" width="11" height="13" /><rect x="3.500" y="3.500" width="5" height="4" /></Icon></ViewBtn>
          <ViewBtn $gap={18}><Icon w={12} h={12} stroke="#777"><path d="M.5 1h4.500v4H.5zM7 1h4.500v4H7zM.5 7h4.500v4H.5zM7 7h4.500v4H7z" /></Icon></ViewBtn>
          <ViewBtn $gap={16}><Icon w={12} h={14} stroke="#777"><path d="M2 1h8v12H2zM4 4h4M4 7h4M4 10h4M6 1v12" /></Icon></ViewBtn>
          <ViewBtn $gap={12}><Icon w={12} h={14} stroke="#777"><path d="M1 1h10v2H1zM2 3h8v6H2zM6 9v4M4 13h4" /></Icon></ViewBtn>
          <Icon w={8} h={8} stroke="#555" sw={2}><path d="M1 4h6" /></Icon>
          <ZoomTrack><ZoomThumb /></ZoomTrack>
          <Icon w={9} h={9} stroke="#555" sw={2}><path d="M0 4.500h9M4.500 0v9" /></Icon>
          <ZoomValue>73%</ZoomValue>
        </StatusTools>
      </StatusBar>
      <TaskStrip>
        <span />
        <StripLight />
        <span />
        <StripLight />
        <span />
      </TaskStrip>
      <Ink width="1280" height="720" viewBox="0 0 1280 720" fill="none" stroke="#dc2430" strokeWidth="1.600" strokeLinecap="round" strokeLinejoin="round">
        {strokes.map(line => <path key={line} d={smooth(line)} />)}
      </Ink>
      <Recorder>
        <RecTop>
          <Icon w={16} h={16} stroke="none"><rect width="16" height="16" rx="1" fill="#e47a3a" /><circle cx="8" cy="8" r="4.500" fill="#fff" /></Icon>
          <span>Recording:&nbsp; 00:11:52</span>
        </RecTop>
        <RecBottom>
          <Icon w={21} h={21} stroke="#555" sw={1.6}><circle cx="10.500" cy="10.500" r="9.500" /><path d="M8 6.500v8M13 6.500v8" strokeWidth="2.500" /></Icon>
          <RecLabel $left={5}>Pause</RecLabel>
          <Square />
          <RecLabel $left={7}>Stop</RecLabel>
          <Hint>(F8)</Hint>
          <PencilWrap>
            <Icon w={23} h={22} stroke="none"><path d="M1 21l3-8L16 1l6 6L10 18z" fill="#666" /></Icon>
            D
          </PencilWrap>
        </RecBottom>
      </Recorder>
    </Page>
  );
}
